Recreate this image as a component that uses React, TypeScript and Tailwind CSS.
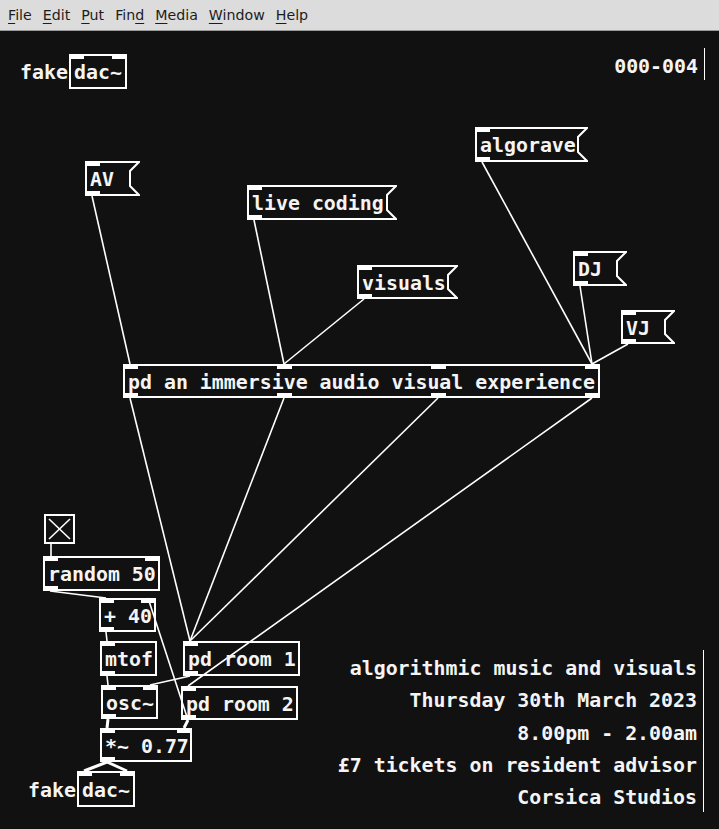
const OFF = 31 // page y where the canvas starts
const MONO = "font-['DejaVu_Sans_Mono','Liberation_Mono',monospace] font-bold text-[19.9px]"

type Box = {
  x: number
  y: number
  w: number
  h: number
  text: string
  msg?: boolean
  ins: number
  outs: number
}

const boxes: Record<string, Box> = {
  dacTop: { x: 69, y: 54, w: 58, h: 35, text: 'dac~', ins: 2, outs: 0 },
  av: { x: 85, y: 161, w: 55, h: 35, text: 'AV', msg: true, ins: 1, outs: 1 },
  live: { x: 247, y: 185, w: 150, h: 35, text: 'live coding', msg: true, ins: 1, outs: 1 },
  visuals: { x: 357, y: 265, w: 101, h: 34, text: 'visuals', msg: true, ins: 1, outs: 1 },
  algorave: { x: 475, y: 127, w: 113, h: 35, text: 'algorave', msg: true, ins: 1, outs: 1 },
  dj: { x: 573, y: 251, w: 54, h: 35, text: 'DJ', msg: true, ins: 1, outs: 1 },
  vj: { x: 621, y: 310, w: 54, h: 34, text: 'VJ', msg: true, ins: 1, outs: 1 },
  pd: { x: 123, y: 364, w: 477, h: 34, text: 'pd an immersive audio visual experience', ins: 4, outs: 4 },
  random: { x: 43, y: 556, w: 117, h: 35, text: 'random 50', ins: 2, outs: 1 },
  plus: { x: 99, y: 598, w: 57, h: 34, text: '+ 40', ins: 2, outs: 1 },
  mtof: { x: 100, y: 641, w: 57, h: 35, text: 'mtof', ins: 1, outs: 1 },
  osc: { x: 101, y: 685, w: 57, h: 34, text: 'osc~', ins: 2, outs: 1 },
  room1: { x: 183, y: 641, w: 117, h: 35, text: 'pd room 1', ins: 1, outs: 1 },
  room2: { x: 181, y: 686, w: 117, h: 34, text: 'pd room 2', ins: 1, outs: 1 },
  mul: { x: 100, y: 728, w: 92, h: 34, text: '*~ 0.77', ins: 2, outs: 1 },
  dacBot: { x: 77, y: 771, w: 58, h: 36, text: 'dac~', ins: 2, outs: 0 },
}

const toggle = { x: 44, y: 514, w: 31, h: 30 }

// [from, outlet, to, inlet, signal]
const cords: [string, number, string, number, boolean?][] = [
  ['av', 0, 'pd', 0],
  ['live', 0, 'pd', 1],
  ['visuals', 0, 'pd', 1],
  ['algorave', 0, 'pd', 3],
  ['dj', 0, 'pd', 3],
  ['vj', 0, 'pd', 3],
  ['pd', 0, 'room1', 0],
  ['pd', 1, 'room1', 0],
  ['pd', 2, 'room1', 0],
  ['pd', 3, 'room2', 0],
  ['random', 0, 'plus', 0],
  ['plus', 0, 'mtof', 0],
  ['mtof', 0, 'osc', 0],
  ['room1', 0, 'osc', 1],
  ['room2', 0, 'plus', 1],
  ['room2', 0, 'mul', 1, true],
  ['osc', 0, 'mul', 0, true],
  ['mul', 0, 'dacBot', 0, true],
  ['mul', 0, 'dacBot', 1, true],
]

const info = [
  'algorithmic music and visuals',
  'Thursday 30th March 2023',
  '8.00pm - 2.00am',
  '£7 tickets on resident advisor',
  'Corsica Studios',
]

const ioX = (i: number, n: number, w: number) => (n === 1 ? 0 : ((w - 15) * i) / (n - 1))

function PdBox({ b }: { b: Box }) {
  return (
    <div
      className="absolute flex items-center"
      style={{ left: b.x, top: b.y - OFF, width: b.w, height: b.h }}
    >
      {b.msg ? (
        <svg className="absolute inset-0" width={b.w} height={b.h}>
          <polygon
            points={`1,1 ${b.w - 1},1 ${b.w - 10},10 ${b.w - 10},${b.h - 10} ${b.w - 1},${b.h - 1} 1,${b.h - 1}`}
            fill="none"
            stroke="#ffffff"
            strokeWidth={2}
          />
        </svg>
      ) : (
        <div className="absolute inset-0 border-2 border-white" />
      )}
      {Array.from({ length: b.ins }).map((_, i) => (
        <div
          key={'i' + i}
          className="absolute top-0 h-[5px] w-[15px] bg-white"
          style={{ left: ioX(i, b.ins, b.w) }}
        />
      ))}
      {Array.from({ length: b.outs }).map((_, i) => (
        <div
          key={'o' + i}
          className="absolute bottom-0 h-[5px] w-[15px] bg-white"
          style={{ left: ioX(i, b.outs, b.w) }}
        />
      ))}
      <span className="relative whitespace-pre pl-[5px] pt-[3px] leading-none">{b.text}</span>
    </div>
  )
}

function Menu({ pre, u, post }: { pre?: string; u: string; post?: string }) {
  return (
    <span>
      {pre}
      <span className="underline underline-offset-[3px]">{u}</span>
      {post}
    </span>
  )
}

export default function App() {
  return (
    <div className="h-[829px] w-[719px] overflow-hidden bg-[#111111]">
      {/* Menu bar */}
      <div className="flex h-[31px] items-center gap-[11px] border-b border-[#9a9a9a] bg-[#dcdcdc] pl-2 pt-[1px] font-['DejaVu_Sans',sans-serif] text-[14.2px] text-[#1c1c1c]">
        <Menu u="F" post="ile" />
        <Menu u="E" post="dit" />
        <Menu u="P" post="ut" />
        <Menu pre="Fin" u="d" />
        <Menu u="M" post="edia" />
        <Menu u="W" post="indow" />
        <Menu u="H" post="elp" />
      </div>

      {/* Canvas */}
      <div className={`relative h-[798px] text-[#f4f4f4] ${MONO}`}>
        <svg className="absolute inset-0" width={719} height={798}>
          {cords.map(([a, o, b, i, sig], k) => {
            const f = boxes[a]
            const t = boxes[b]
            const x1 = f.x + ioX(o, f.outs, f.w) + 7
            const y1 = f.y + f.h - OFF
            const x2 = t.x + ioX(i, t.ins, t.w) + 7
            const y2 = t.y - OFF
            return (
              <line
                key={k}
                x1={x1}
                y1={y1}
                x2={x2}
                y2={y2}
                stroke="#ffffff"
                strokeWidth={sig ? 3 : 1.6}
              />
            )
          })}
          <line x1={51} y1={toggle.y + toggle.h - OFF} x2={51} y2={556 - OFF} stroke="#ffffff" strokeWidth={1.6} />
        </svg>

        {/* comments beside the dac~ objects */}
        <div className="absolute left-[20px] flex h-[35px] items-center pt-[3px] leading-none" style={{ top: 54 - OFF }}>
          fake
        </div>
        <div className="absolute left-[28px] flex h-[36px] items-center pt-[3px] leading-none" style={{ top: 771 - OFF }}>
          fake
        </div>

        {/* counter comment */}
        <div className="absolute right-[14px] top-[17px] flex h-[32px] items-center border-r border-white pr-[6px] pt-[5px] leading-none">
          000-004
        </div>

        {Object.entries(boxes).map(([k, b]) => (
          <PdBox key={k} b={b} />
        ))}

        {/* toggle */}
        <div
          className="absolute border-2 border-white"
          style={{ left: toggle.x, top: toggle.y - OFF, width: toggle.w, height: toggle.h }}
        >
          <svg className="absolute inset-0" width={27} height={26}>
            <line x1={3} y1={3} x2={24} y2={23} stroke="#ffffff" strokeWidth={1.6} />
            <line x1={24} y1={3} x2={3} y2={23} stroke="#ffffff" strokeWidth={1.6} />
          </svg>
        </div>

        {/* event info comments */}
        <div className="absolute right-[15px] top-[619px] flex flex-col">
          {info.map((line) => (
            <div
              key={line}
              className="flex h-[32.4px] items-center justify-end whitespace-pre border-r border-white pr-[6px] pt-[5px] leading-none"
            >
              {line}
            </div>
          ))}
        </div>
      </div>
    </div>
  )
}
